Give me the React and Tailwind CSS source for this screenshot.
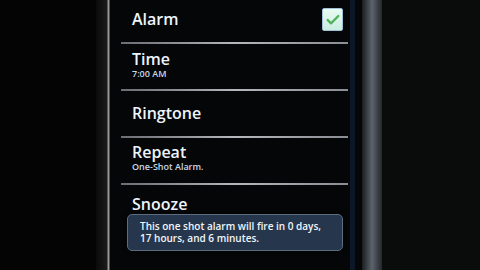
import { Check } from 'lucide-react';

function Divider() {
  return (
    <div className="ml-[11px] mr-[2px] h-[2px] bg-gradient-to-r from-[#6a6e74] via-[#b4b8bc] to-[#8a8e94]" />
  );
}

function Row({ title, sub, height, children }) {
  return (
    <div className={`flex items-center justify-between pl-[22px] pr-[7px] ${height}`}>
      <div className="flex flex-col">
        <span className="text-[16px] leading-[16px] font-semibold text-[#eef4fb]">{title}</span>
        {sub && <span className="mt-[2px] text-[9px] leading-[10px] font-semibold text-[#c9d8ea]">{sub}</span>}
      </div>
      {children}
    </div>
  );
}

export default function App() {
  return (
    <div className="flex w-[480px] h-[270px] overflow-hidden bg-[#030303]" style={{ fontFamily: '"Open Sans", "DejaVu Sans", sans-serif' }}>
      <div className="w-[96px] bg-[#040404]" />
      <div className="w-[11px] bg-gradient-to-r from-[#0a0a0a] to-[#1a1b1a]" />
      <div className="w-[3px] bg-gradient-to-r from-[#3a3a3a] via-[#9a9a9a] to-[#2a2a2a]" />

      <div className="relative w-[240px] bg-[#050607] flex flex-col">
        <Row title="Alarm" height="h-[42px] pb-[4px]">
          <div className="w-[21px] h-[23px] rounded-[2px] border border-[#9fc2d8] bg-gradient-to-b from-[#e8fbf3] to-[#c9eedf] flex items-center justify-center mt-[1px]">
            <Check size={16} strokeWidth={3.5} className="text-[#4fb25a]" />
          </div>
        </Row>
        <Divider />
        <Row title="Time" sub="7:00 AM" height="h-[45px] pb-[3px]" />
        <Divider />
        <Row title="Ringtone" height="h-[45px] pb-[2px]" />
        <Divider />
        <Row title="Repeat" sub="One-Shot Alarm." height="h-[45px] pb-[5px]" />
        <Divider />
        <div className="pl-[22px] pt-[7px]">
          <span className="text-[16px] leading-[16px] font-semibold text-[#eef4fb]">Snooze</span>
        </div>

        <div className="absolute left-[17px] top-[214px] w-[216px] h-[37px] rounded-[5px] border border-[#5c6d82] bg-[#26364c] px-[12px] pt-[5px] shadow-[0_0_4px_rgba(0,0,0,0.8)]">
          <p className="text-[10px] leading-[12px] font-semibold text-[#f2f6fb]">
            This one shot alarm will fire in 0 days,
            <br />
            17 hours, and 6 minutes.
          </p>
        </div>
      </div>

      <div className="w-[5px] bg-[#0c1828]" />
      <div className="w-[7px] bg-[#050608]" />
      <div className="w-[20px] bg-gradient-to-r from-[#1a1e22] via-[#5e646c] to-[#24282c]" />
      <div className="flex-1 bg-[#0a0b0b]" />
    </div>
  );
}
